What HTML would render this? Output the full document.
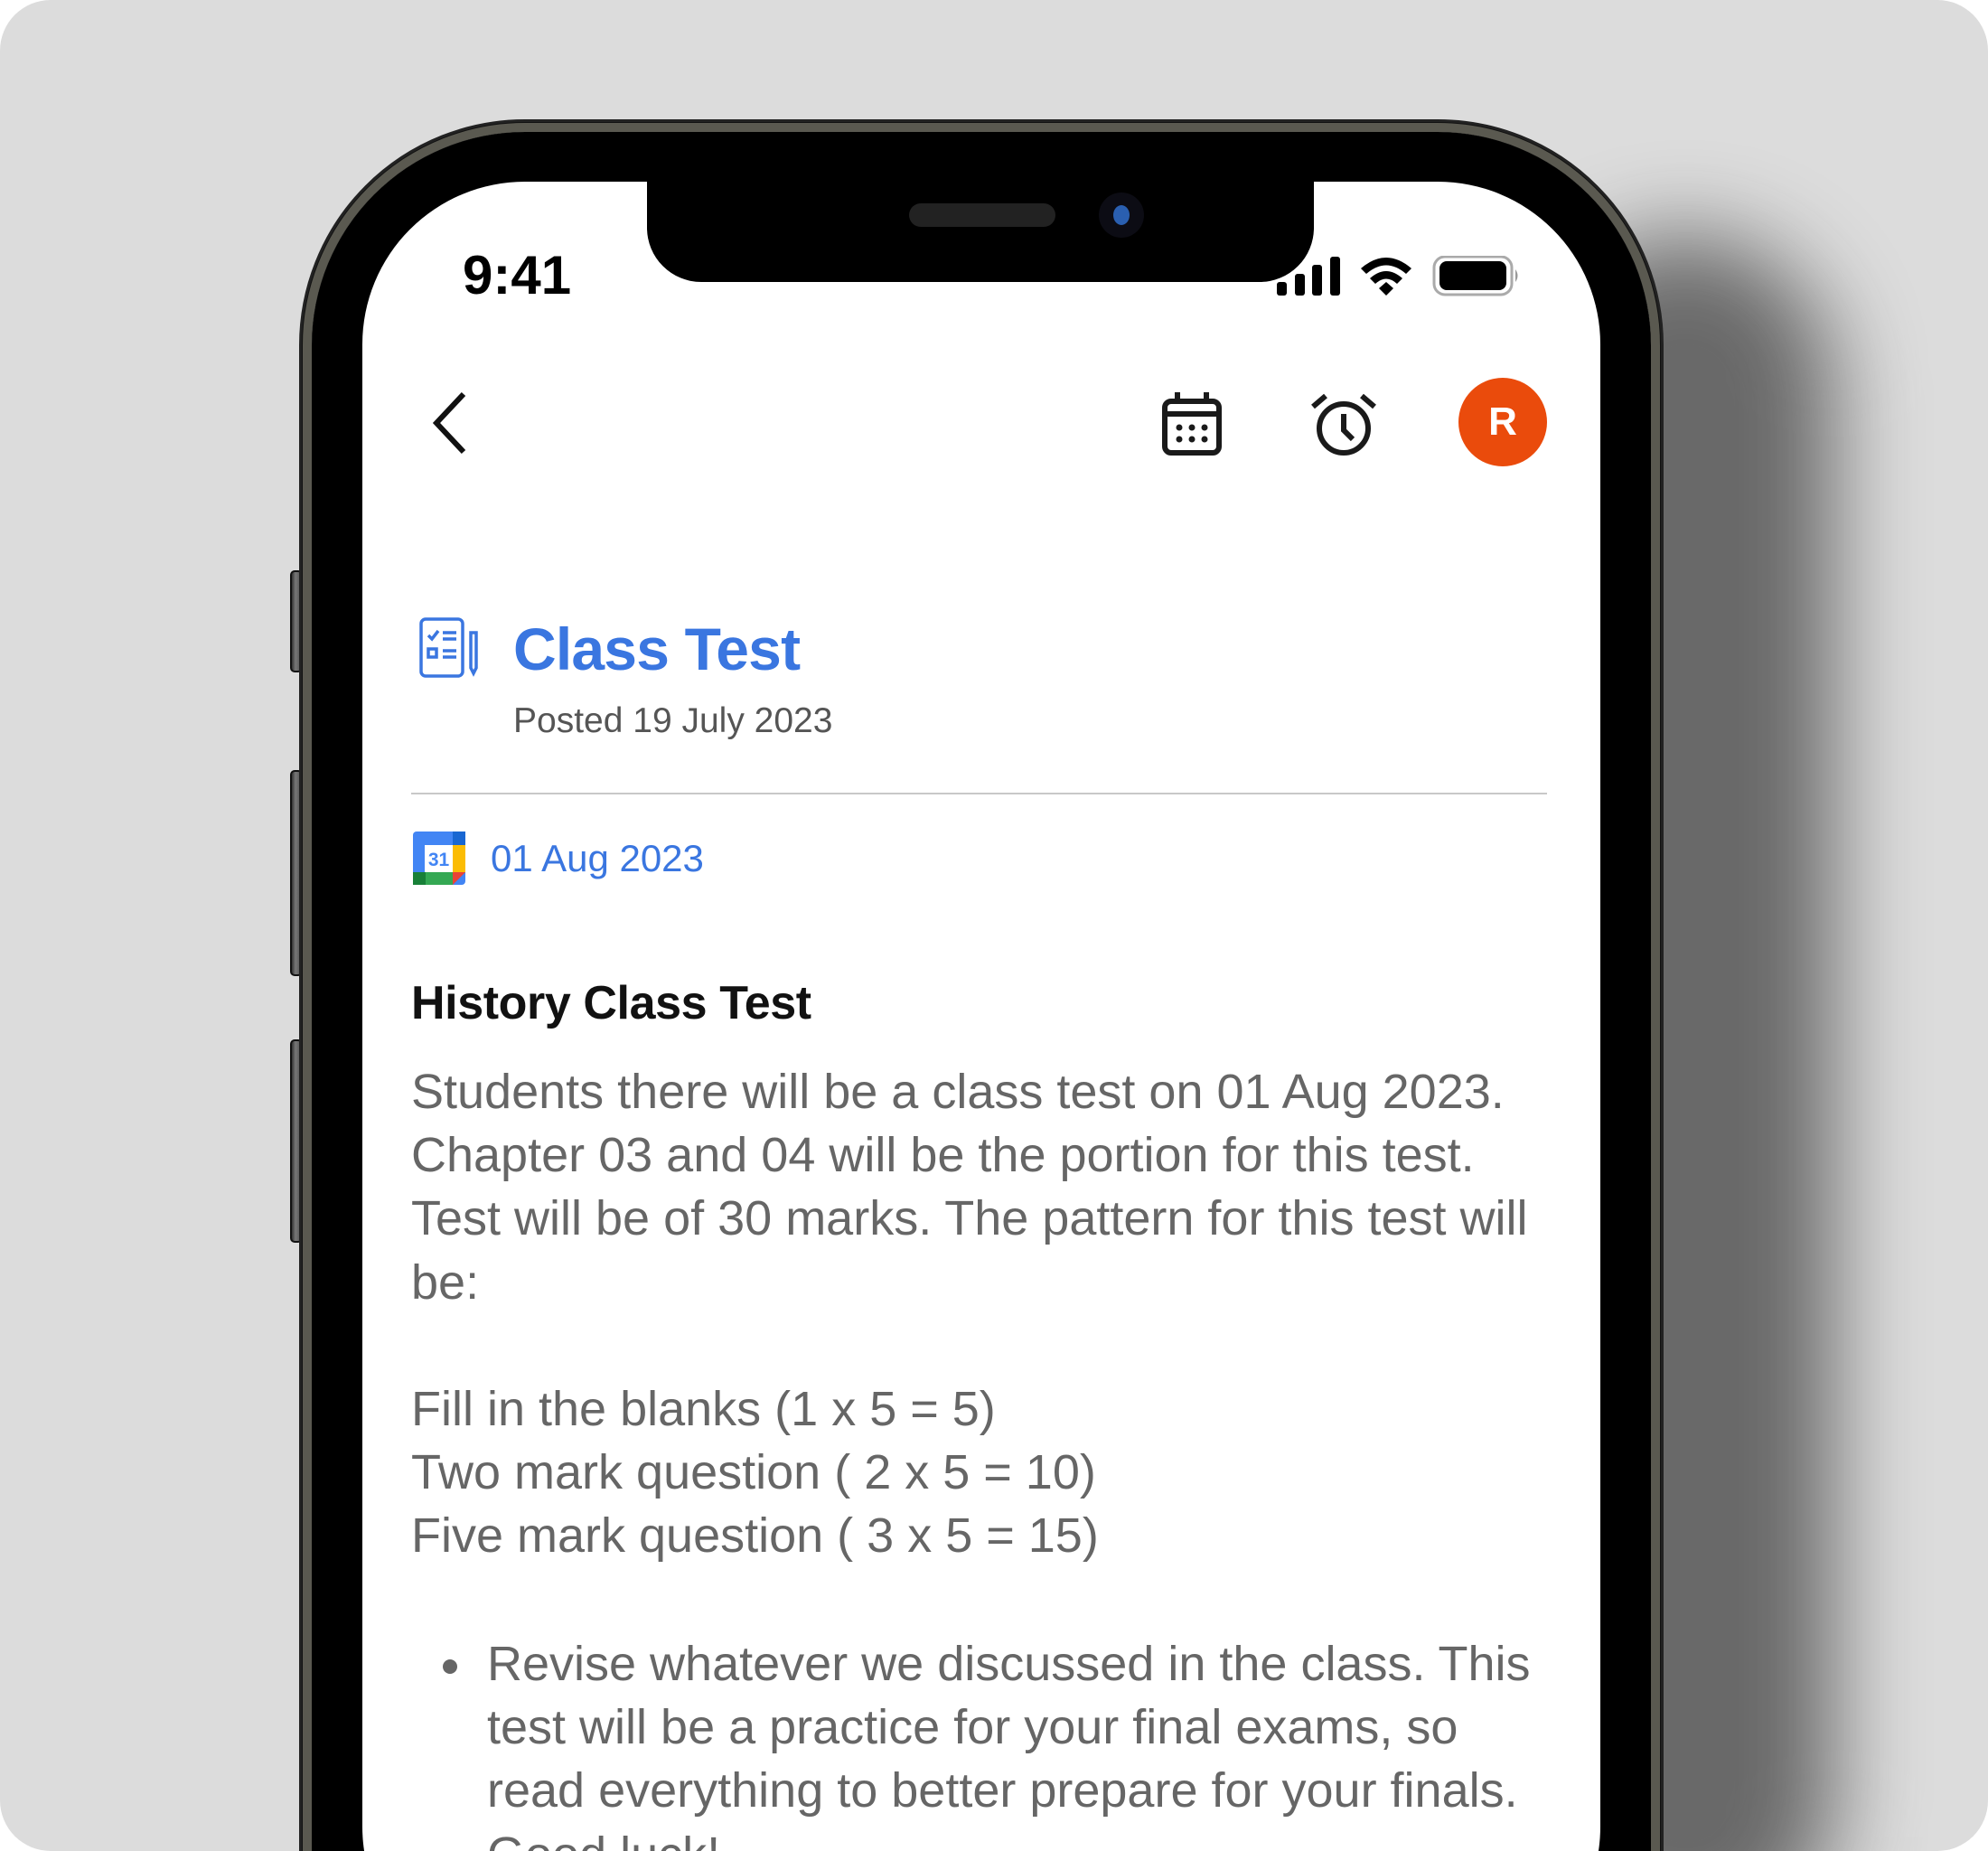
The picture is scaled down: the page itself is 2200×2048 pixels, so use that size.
<!DOCTYPE html>
<html><head><meta charset="utf-8"><style>
*{margin:0;padding:0;box-sizing:border-box}
html,body{width:2200px;height:2048px;background:#fff;overflow:hidden}
.bg{position:absolute;left:0;top:0;width:2200px;height:2048px;background:#dcdcdc;border-radius:56px;overflow:hidden}
.shadow{position:absolute;left:1700px;top:260px;width:330px;height:1900px;border-radius:200px;background:#555;filter:blur(50px);opacity:.85}
.btn{position:absolute;left:321px;width:14px;background:linear-gradient(90deg,#333,#777 40%,#555);border:2px solid #111;border-radius:5px}
.phone{position:absolute;left:331px;top:132px;width:1510px;height:2200px;border-radius:250px;background:#111;border:3px solid #222}
.metal{position:absolute;left:335px;top:136px;width:1502px;height:2200px;border-radius:246px;border:10px solid #5a5950;box-shadow:inset 0 0 0 2px #d8d8cf}
.bezel{position:absolute;left:345px;top:146px;width:1482px;height:2200px;border-radius:236px;background:#000}
.screen{position:absolute;left:401px;top:201px;width:1370px;height:2000px;border-radius:180px;background:#fff;overflow:hidden;font-family:"Liberation Sans",sans-serif}
.notch{position:absolute;left:315px;top:-10px;width:738px;height:121px;background:#000;border-radius:0 0 60px 60px}
.abs{position:absolute;white-space:nowrap}
.body{color:#666;font-size:54px}
</style></head><body>
<div class="bg">
<div class="shadow"></div>
<div class="btn" style="top:631px;height:113px"></div>
<div class="btn" style="top:852px;height:228px"></div>
<div class="btn" style="top:1150px;height:225px"></div>
<div class="phone"></div>
<div class="metal"></div>
<div class="bezel"></div>
<div class="screen">
 <div class="notch">
  <div style="position:absolute;left:290px;top:34px;width:162px;height:26px;border-radius:13px;background:#222"></div>
  <div style="position:absolute;left:500px;top:22px;width:50px;height:50px;border-radius:50%;background:#0c0c14"></div>
  <div style="position:absolute;left:516px;top:36px;width:18px;height:22px;border-radius:50%;background:#2a5fb0"></div>
 </div>
 <div class="abs" style="left:111px;top:74px;font-size:60px;font-weight:bold;line-height:60px;color:#000">9:41</div>
 <svg class="abs" style="left:1012px;top:82px" width="290" height="50" viewBox="1413 282 290 50">
  <rect x="1413" y="311" width="11" height="15" rx="3"/><rect x="1433" y="302" width="11" height="24" rx="3"/><rect x="1452" y="292" width="11" height="34" rx="3"/><rect x="1472" y="283" width="11" height="43" rx="3"/>
  <path d="M1506 296 Q1534 272 1562 296 L1556 302 Q1534 283 1512 302Z M1516 307 Q1534 291 1552 307 L1546 313 Q1534 302 1522 313Z M1526 318 L1534 311 L1542 318 L1534 326Z"/>
  <rect x="1587" y="283" width="86" height="42" rx="12" fill="none" stroke="#aaa" stroke-width="3"/>
  <rect x="1593" y="288" width="74" height="32" rx="8"/>
  <path d="M1677 297 Q1682 304 1677 311Z" fill="#999"/>
 </svg>
 <svg class="abs" style="left:76px;top:231px" width="44" height="72" viewBox="0 0 44 72"><path d="M36 4 L6 36 L36 68" fill="none" stroke="#111" stroke-width="6"/></svg>
 <svg class="abs" style="left:885px;top:232px" width="66" height="72" viewBox="0 0 66 72">
  <rect x="3" y="11" width="60" height="57" rx="7" fill="none" stroke="#1a1a1a" stroke-width="6"/>
  <rect x="3" y="22" width="60" height="6" fill="#1a1a1a"/>
  <rect x="14" y="1" width="6" height="12" fill="#1a1a1a"/><rect x="46" y="1" width="6" height="12" fill="#1a1a1a"/>
  <g fill="#1a1a1a"><circle cx="19" cy="40" r="3.5"/><circle cx="33" cy="40" r="3.5"/><circle cx="47" cy="40" r="3.5"/><circle cx="19" cy="53" r="3.5"/><circle cx="33" cy="53" r="3.5"/><circle cx="47" cy="53" r="3.5"/></g>
 </svg>
 <svg class="abs" style="left:1048px;top:231px" width="76" height="74" viewBox="0 0 76 74" fill="none" stroke="#1a1a1a" stroke-width="6">
  <circle cx="38" cy="42" r="27"/><path d="M38 26 V44 L48 54"/><path d="M4 18 L18 6 M72 18 L58 6"/>
 </svg>
 <div class="abs" style="left:1213px;top:217px;width:98px;height:98px;border-radius:50%;background:#ea4b0c;color:#fff;font-size:44px;font-weight:bold;line-height:98px;text-align:center">R</div>
 <svg class="abs" style="left:63px;top:482px" width="68" height="68" viewBox="0 0 68 68" fill="none" stroke="#3a76e0" stroke-width="3.5">
  <rect x="2" y="2" width="46" height="63" rx="5"/>
  <path d="M10 20 L14 24 L21 15 M26 17 H41 M26 24 H41 M26 37 H41 M26 44 H41"/>
  <rect x="10" y="35" width="9" height="9"/>
  <path d="M57 17 V56 L60 62 L63 56 V17 Z"/>
 </svg>
 <div class="abs" style="left:167px;top:477px;font-size:66px;font-weight:bold;color:#3a76e0;line-height:80px;letter-spacing:-0.8px">Class Test</div>
 <div class="abs" style="left:167px;top:572px;font-size:39px;color:#555;line-height:50px">Posted 19 July 2023</div>
 <div class="abs" style="left:54px;top:676px;width:1257px;height:2px;background:#c8c8c8"></div>
 <svg class="abs" style="left:56px;top:719px" width="58" height="59" viewBox="0 0 58 59">
  <rect x="0" y="0" width="58" height="59" rx="4" fill="#4285f4"/>
  <rect x="44" y="0" width="14" height="15" fill="#1967d2"/>
  <rect x="44" y="15" width="14" height="30" fill="#fbbc04"/>
  <rect x="0" y="45" width="44" height="14" fill="#34a853"/>
  <rect x="0" y="45" width="14" height="14" fill="#188038"/>
  <path d="M44 45 H58 L44 59Z" fill="#ea4335"/>
  <rect x="13" y="15" width="31" height="30" fill="#fff"/>
  <text x="28.5" y="38" font-family="Liberation Sans" font-size="21" font-weight="bold" fill="#4285f4" text-anchor="middle">31</text>
 </svg>
 <div class="abs" style="left:142px;top:723px;font-size:42px;color:#3a76e0;line-height:52px">01 Aug 2023</div>
 <div class="abs" style="left:54px;top:877px;font-size:52px;font-weight:bold;color:#111;line-height:64px;letter-spacing:-0.4px">History Class Test</div>
 <div class="abs body" style="left:54px;top:972px;line-height:70.2px">Students there will be a class test on 01 Aug 2023.<br>Chapter 03 and 04 will be the portion for this test.<br>Test will be of 30 marks. The pattern for this test will<br>be:<br><br>Fill in the blanks (1 x 5 = 5)<br>Two mark question ( 2 x 5 = 10)<br>Five mark question ( 3 x 5 = 15)</div>
 <div class="abs" style="left:89px;top:1635px;width:16px;height:16px;border-radius:50%;background:#666"></div>
 <div class="abs body" style="left:138px;top:1605px;line-height:70.2px">Revise whatever we discussed in the class. This<br>test will be a practice for your final exams, so<br>read everything to better prepare for your finals.<br>Good luck!</div>
</div>
</div>
</body></html>
